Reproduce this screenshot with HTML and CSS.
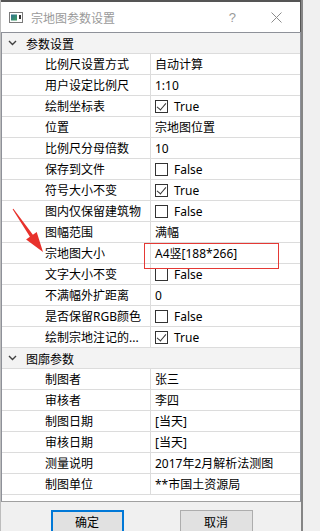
FILE: index.html
```html
<!DOCTYPE html>
<html lang="zh-CN">
<head>
<meta charset="utf-8">
<title>宗地图参数设置</title>
<link rel="stylesheet" href="styles.css">
</head>
<body>
<div class="window">
  <div class="titlebar">
    <svg class="title-icon" width="14" height="11" viewBox="0 0 14 11">
      <defs>
        <linearGradient id="g" x1="0" y1="0" x2="1" y2="1">
          <stop offset="0" stop-color="#2f6f8f"/>
          <stop offset="1" stop-color="#3fa060"/>
        </linearGradient>
      </defs>
      <rect x="0.5" y="0.5" width="13" height="10" fill="#fff" stroke="#7a7a7a"/>
      <rect x="2" y="2.5" width="6" height="6" fill="url(#g)"/>
      <rect x="10" y="3" width="2" height="4" fill="#333"/>
    </svg>
    <span class="title-text">宗地图参数设置</span>
    <span class="title-help">?</span>
    <svg class="title-close" width="11" height="11" viewBox="0 0 11 11">
      <path d="M0.5 0.5 L10.5 10.5 M10.5 0.5 L0.5 10.5" stroke="#8c8c8c" stroke-width="1" fill="none"/>
    </svg>
  </div>

  <div class="grid">
    <div class="cat">
      <svg class="chev" width="9" height="6" viewBox="0 0 9 6"><path d="M1 1 L4.5 4.5 L8 1" stroke="#404040" stroke-width="1.4" fill="none"/></svg>
      <span>参数设置</span>
    </div>
    <div class="row"><div class="name">比例尺设置方式</div><div class="val">自动计算</div></div>
    <div class="row"><div class="name">用户设定比例尺</div><div class="val">1:10</div></div>
    <div class="row"><div class="name">绘制坐标表</div><div class="val"><span class="cb checked"></span>True</div></div>
    <div class="row"><div class="name">位置</div><div class="val">宗地图位置</div></div>
    <div class="row"><div class="name">比例尺分母倍数</div><div class="val">10</div></div>
    <div class="row"><div class="name">保存到文件</div><div class="val"><span class="cb"></span>False</div></div>
    <div class="row"><div class="name">符号大小不变</div><div class="val"><span class="cb checked"></span>True</div></div>
    <div class="row"><div class="name">图内仅保留建筑物</div><div class="val"><span class="cb"></span>False</div></div>
    <div class="row"><div class="name">图幅范围</div><div class="val">满幅</div></div>
    <div class="row"><div class="name">宗地图大小</div><div class="val">A4竖[188*266]</div></div>
    <div class="row"><div class="name">文字大小不变</div><div class="val"><span class="cb"></span>False</div></div>
    <div class="row"><div class="name">不满幅外扩距离</div><div class="val">0</div></div>
    <div class="row"><div class="name">是否保留RGB颜色</div><div class="val"><span class="cb"></span>False</div></div>
    <div class="row"><div class="name">绘制宗地注记的...</div><div class="val"><span class="cb checked"></span>True</div></div>
    <div class="cat">
      <svg class="chev" width="9" height="6" viewBox="0 0 9 6"><path d="M1 1 L4.5 4.5 L8 1" stroke="#404040" stroke-width="1.4" fill="none"/></svg>
      <span>图廓参数</span>
    </div>
    <div class="row"><div class="name">制图者</div><div class="val">张三</div></div>
    <div class="row"><div class="name">审核者</div><div class="val">李四</div></div>
    <div class="row"><div class="name">制图日期</div><div class="val">[当天]</div></div>
    <div class="row"><div class="name">审核日期</div><div class="val">[当天]</div></div>
    <div class="row"><div class="name">测量说明</div><div class="val">2017年2月解析法测图</div></div>
    <div class="row"><div class="name">制图单位</div><div class="val">**市国土资源局</div></div>
  </div>

  <div class="footer">
    <button class="btn btn-primary">确定</button>
    <button class="btn">取消</button>
  </div>

  <div class="highlight"></div>
  <svg class="arrow" width="303" height="531" viewBox="0 0 303 531">
    <polygon points="13.4,208.7 32.9,234.7 36.7,231.9 43,252 26.1,239.5 29.9,236.7 12.6,209.3" fill="#e8322c"/>
  </svg>
</div>
</body>
</html>
```

FILE: styles.css
```css
* { box-sizing: border-box; }

html, body {
  margin: 0;
  padding: 0;
  background: #f0f0f0;
}

body {
  font-family: "Noto Sans", "Noto Sans CJK SC", sans-serif;
  font-size: 12px;
  color: #000;
}

.window {
  position: relative;
  width: 303px;
  height: 531px;
  overflow: hidden;
  display: flex;
  flex-direction: column;
  background: #f0f0f0;
  border-right: 2px solid #858585;
  border-left: 1px solid #bdbdbd;
}

.titlebar {
  height: 32px;
  flex: none;
  display: flex;
  align-items: center;
  background: #fff;
  border-top: 2px solid #555;
  margin-left: -1px;
  margin-right: -2px;
  border-left: 1px solid #555;
  border-right: 3px solid #555;
  position: relative;
}

.title-icon {
  margin-left: 8px;
  margin-top: 1px;
}

.title-text {
  margin-left: 8px;
  color: #9a9a9a;
  font-family: "Noto Sans CJK SC", sans-serif;
  font-size: 12px;
  flex: 1;
}

.title-help {
  color: #9a9a9a;
  font-family: "Liberation Sans", sans-serif;
  font-size: 13px;
  margin-right: 35px;
}

.title-close {
  margin-right: 18px;
}

.grid {
  flex: none;
  height: 470px;
  background: #fff;
  border: 1px solid #8e9199;
  border-bottom-color: #a0a0a0;
  display: flex;
  flex-direction: column;
}

.cat {
  height: 21px;
  flex: none;
  display: flex;
  align-items: center;
  background: #f3f3f3;
  border-bottom: 1px solid #dcdcdc;
  font-family: "Noto Sans CJK SC", sans-serif;
}

.chev {
  margin-left: 6px;
  margin-right: 9px;
}

.row {
  height: 21px;
  flex: none;
  display: flex;
  border-bottom: 1px solid #dcdcdc;
}

.name {
  width: 149px;
  flex: none;
  padding-left: 43px;
  border-right: 1px solid #dcdcdc;
  display: flex;
  align-items: center;
  white-space: nowrap;
  overflow: hidden;
}

.val {
  flex: 1;
  padding-left: 4px;
  display: flex;
  align-items: center;
  white-space: nowrap;
}

.cb {
  width: 13px;
  height: 13px;
  border: 1px solid #333;
  background: #fff;
  margin-right: 6px;
  position: relative;
  flex: none;
}

.cb.checked::after {
  content: "";
  position: absolute;
  left: 3px;
  top: 0px;
  width: 4px;
  height: 8px;
  border-right: 1.3px solid #333;
  border-bottom: 1.3px solid #333;
  transform: rotate(40deg);
}

.footer {
  flex: none;
  display: flex;
  justify-content: center;
  gap: 56px;
  padding-top: 8px;
  margin-left: 1px;
}

.btn {
  width: 73px;
  height: 23px;
  background: #e1e1e1;
  border: 1px solid #adadad;
  font-family: "Noto Sans CJK SC", sans-serif;
  font-size: 12px;
  color: #000;
  padding: 0;
  border-radius: 0;
}

.btn-primary {
  border: 2px solid #0078d7;
}

.highlight {
  position: absolute;
  left: 143px;
  top: 243px;
  width: 135px;
  height: 26px;
  border: 1px solid #e53935;
  pointer-events: none;
}

.arrow {
  position: absolute;
  left: -1px;
  top: 0;
  pointer-events: none;
}
```
